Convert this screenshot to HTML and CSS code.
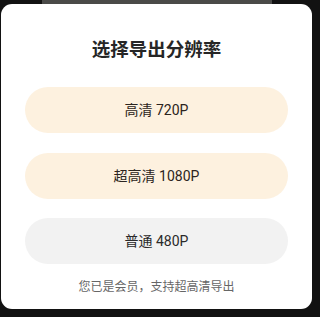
FILE: index.html
```html
<!DOCTYPE html>
<html lang="zh-CN">

<head>
    <meta charset="UTF-8">
    <meta name="viewport" content="width=device-width, initial-scale=1.0">
    <title>选择导出分辨率</title>
    <link rel="stylesheet" href="styles.css">
</head>

<body>
    <div class="page">
        <div class="top-strip">
            <div class="cover"></div>
        </div>
        <div class="dialog">
            <h2 class="title">选择导出分辨率</h2>
            <ul class="options">
                <li class="opt vip">高清 720P</li>
                <li class="opt vip">超高清 1080P</li>
                <li class="opt normal">普通 480P</li>
            </ul>
            <p class="tip">您已是会员，支持超高清导出</p>
        </div>
    </div>
</body>

</html>
```

FILE: styles.css
```css
body {
    margin: 0;
    background-color: #121212;
    font-family: Roboto, "Noto Sans CJK SC", sans-serif;
}

ul {
    padding: 0;
    margin: 0;
    list-style: none;
}

p,
h2 {
    padding: 0;
    margin: 0;
}

.page {
    width: 320px;
    height: 317px;
    overflow: hidden;
}

.top-strip {
    height: 4px;
    padding: 0 48px 0 42px;
}

.top-strip .cover {
    height: 4px;
    background-color: #4a4a48;
}

.dialog {
    width: 311px;
    margin-left: 1px;
    box-sizing: border-box;
    background-color: #fff;
    border-radius: 11px;
    padding: 32px 24px 12px 24px;
}

.title {
    font-size: 18.5px;
    line-height: 28px;
    font-weight: 700;
    color: #262626;
    text-align: center;
    margin-bottom: 23px;
}

.options {
    display: flex;
    flex-direction: column;
    gap: 19.5px;
}

.opt {
    height: 46px;
    line-height: 46px;
    border-radius: 23px;
    text-align: center;
    font-size: 14px;
    color: #2b2420;
}

.opt.vip {
    background-color: #fdf1df;
}

.opt.normal {
    background-color: #f2f2f2;
    color: #2a2a2a;
}

.tip {
    margin-top: 13px;
    font-size: 12px;
    line-height: 20px;
    color: #666;
    text-align: center;
}
```
